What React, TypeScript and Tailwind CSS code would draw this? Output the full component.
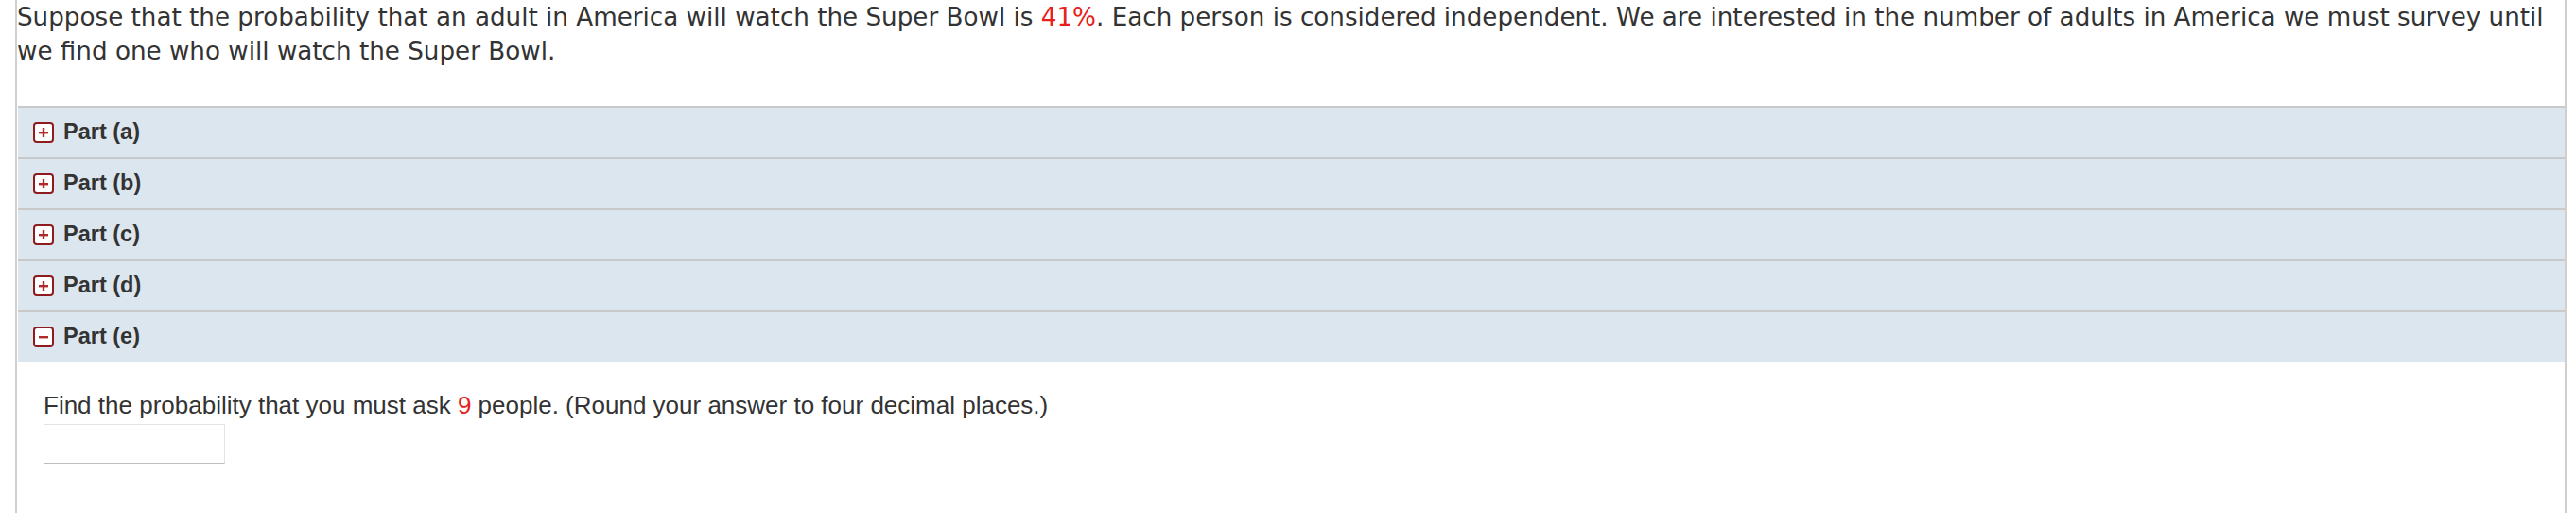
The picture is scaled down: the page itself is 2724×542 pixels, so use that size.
import React from "react";

function PlusIcon({ open }: { open?: boolean }) {
  return (
    <svg width="22" height="22" viewBox="0 0 22 22" className="shrink-0">
      <rect x="1" y="1" width="20" height="20" rx="3" ry="3" fill="#ffffff" stroke="#8e1c1c" strokeWidth="2" />
      <rect x="6" y="10" width="10" height="2.4" fill="#b02a2a" />
      {!open && <rect x="9.8" y="6" width="2.4" height="10" fill="#b02a2a" />}
    </svg>
  );
}

const parts = ["a", "b", "c", "d", "e"];

export default function App() {
  return (
    <div className="ml-[16px] w-[2698px] h-[542px] border-x-2 border-[#cfcfcf] bg-white overflow-hidden">
      <p className="font-['DejaVu_Sans',sans-serif] text-[26.2px] leading-[36px] text-[#333333] pb-[40px]">
        Suppose that the probability that an adult in America will watch the Super Bowl is{" "}
        <span className="text-[#e8201c]">41%</span>. Each person is considered independent. We are interested in the number of adults in America we must survey until we find one who will watch the Super Bowl.
      </p>
      <div className="ml-[1px]">
        {parts.map((p) => (
          <div
            key={p}
            className="h-[54px] border-t-2 border-[#c9c9c9] bg-[#dce6ef] flex items-center pl-[16px] gap-[10px]"
          >
            <PlusIcon open={p === "e"} />
            <span className="font-['Liberation_Sans',Arial,sans-serif] font-bold text-[23.5px] text-[#333333]">
              Part ({p})
            </span>
          </div>
        ))}
      </div>
      <div className="pl-[28px] pt-[31px]">
        <p className="font-['Liberation_Sans',Arial,sans-serif] text-[26px] leading-[30px] text-[#333333]">
          Find the probability that you must ask <span className="text-[#e8201c]">9</span> people. (Round your answer to four decimal places.)
        </p>
        <div className="mt-[5px] w-[192px] h-[42px] border border-[#e3e3e3] border-b-[#bdbdbd] bg-white"></div>
      </div>
    </div>
  );
}
